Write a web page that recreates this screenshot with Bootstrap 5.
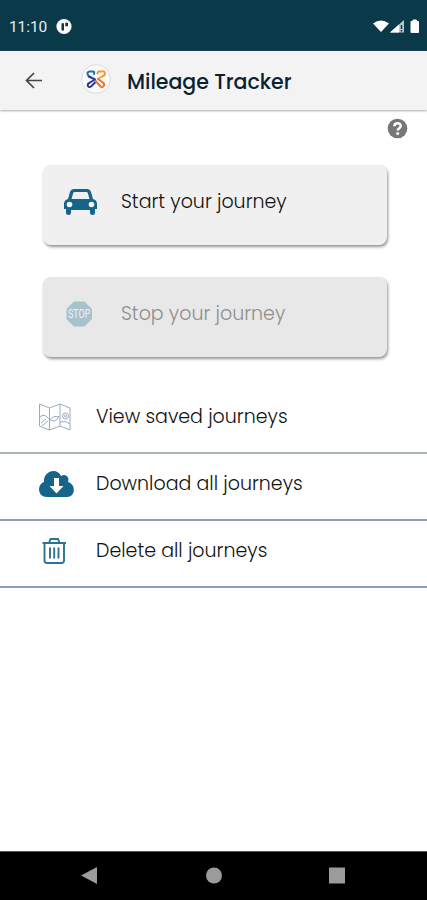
<!DOCTYPE html>
<html lang="en">
<head>
<meta charset="utf-8">
<meta name="viewport" content="width=device-width, initial-scale=1">
<title>Mileage Tracker</title>
<link href="https://cdn.jsdelivr.net/npm/bootstrap@5.3.0/dist/css/bootstrap.min.css" rel="stylesheet">
<style>
body{font-family:Poppins,Inter,"Open Sans",sans-serif;font-size:19px;font-weight:300;color:#111;line-height:28px}
svg{display:block;flex:none;overflow:visible}
.phone{height:900px}
.status{height:51px;background:#0a3a4a;padding:2px 6px 0 9px;font:400 15.5px/20px Roboto,sans-serif;color:#e9f0f2}
.clock{width:39px;letter-spacing:-.1px}
.appbar{height:59px;background:#f3f3f3;box-shadow:0 1px 2px #aaa;padding-left:24px}
.appbar h1{font-size:20.5px;line-height:28px;font-weight:500;color:#0b1f2e;margin:2px 0 0 15px;letter-spacing:-.02px}
.logo{margin-left:36px}
.help{padding:8px 19px 0 0;height:55px}
.tile{width:344px;height:80px;margin-left:43px;border:0;border-radius:8px;background:#f0f0f0;box-shadow:1px 2px 3px rgba(0,0,0,.42);padding:0 0 6px 20px;text-align:left;font-weight:300;color:#111}
.tile + .tile{margin-top:32px}
.tile.off{background:#e8e8e8;color:#8e8e8e}
.tile .pic{width:58px}
.entries{padding-top:30px}
.entry{height:67px;border-bottom:2px solid #8b9fbb;padding:0 0 5px 38px}
.entry .pic{width:58px}
.entry.first{border-color:#a9b6bf}
.navkeys{height:49px;background:#000;border-top:1px solid #555}
</style>
</head>
<body>
<div class="phone d-flex flex-column bg-white overflow-hidden">
  <header class="status d-flex align-items-center">
    <span class="clock">11:10</span>
    <svg class="ms-2" width="16" height="16" viewBox="0 0 16 16"><circle cx="8" cy="7.500" r="7.600" fill="#fff"/><path d="M5.500 11.500V4.200h2.500v7.300zM9.300 3.800H12v3.400H9.300z" fill="#0a3a4a"/></svg>
    <svg class="ms-auto" width="50" height="18" viewBox="0 0 50 18"><path d="M2 5.500Q10 -.5 18 5.500L10 14z" fill="#fff"/><path d="M19 14.500L33 2V14.500z" fill="#b9c5ca"/><path d="M19 14.500L28 6.400V14.500z" fill="#fff"/><path d="M30.500 7v4M30.500 12v1.500" stroke="#0a3a4a" stroke-width="1.500"/><path d="M40 3.500h2V2h3.500v1.500h2v11h-7.500z" fill="#fff" stroke="#fff" stroke-linejoin="round"/></svg>
  </header>
  <div class="appbar d-flex align-items-center flex-shrink-0 position-relative">
    <svg width="20" height="18" viewBox="0 0 20 18"><path d="M18 8.500H3M10 1L2.500 8.500l7.500 7.500" fill="none" stroke="#454545" stroke-width="1.700"/></svg>
    <svg class="logo" width="32" height="32" viewBox="0 0 32 32"><circle cx="16" cy="14" r="14.400" fill="#f9f9f9" stroke="#ddd"/><g fill="none" stroke-width="2" stroke-linecap="round" stroke-linejoin="round"><path d="M9 11.500C6 8 8 6 10.500 6.500S15 5.500 14 9" stroke="#276bb0"/><path d="M9 11.500L15 14.500L10 17.500C6 19.500 8 23.500 11 21.500L16 16.500" stroke="#28389c"/><path d="M17.500 8.500C18 5 20.500 7 22 6.500C25.500 5.500 26 9.500 23 11L18 14" stroke="#f59a2b"/><path d="M18 14L23 17.500C26 20.500 22 23.500 20.500 21.500L16 16.500" stroke="#ed752d"/></g></svg>
    <h1>Mileage Tracker</h1>
  </div>
  <main class="flex-grow-1">
    <div class="help d-flex justify-content-end">
      <svg width="21" height="21" viewBox="0 0 21 21"><circle cx="10.500" cy="10.500" r="9.800" fill="#777"/><path d="M7.300 8.300C7.500 4.100 14 4.200 13.700 8.200C13.500 10.200 10.700 10.200 10.700 12.500" fill="none" stroke="#fff" stroke-width="2.500"/><circle cx="10.700" cy="15.500" r="1.500" fill="#fff"/></svg>
    </div>
    <button class="tile d-flex align-items-center">
      <span class="pic"><svg width="35" height="28" viewBox="0 0 35 28"><path fill="#17648a" fill-rule="evenodd" d="M11 1H24Q27 1 28 4L30 11Q34 12 34 16V21H32V25Q32 27 29.500 27T27 25V22H8V25Q8 27 5.500 27T3 25V21H1V16Q1 12 5 11L7 4Q8 1 11 1zM11.500 4Q10.500 4 10.200 5L8.500 11H26.500L24.800 5Q24.500 4 23.500 4z"/><circle cx="6.500" cy="16.500" r="2.800" fill="#f4f8fa"/><circle cx="28.500" cy="16.500" r="2.800" fill="#f4f8fa"/></svg></span>
      <span>Start your journey</span>
    </button>
    <button class="tile off d-flex align-items-center" disabled>
      <span class="pic"><svg width="32" height="26" viewBox="0 0 32 26"><path d="M11 .5H21.500L29 8V18L21.500 25.500H11L3.500 18V8z" fill="#a7c1cd"/><text x="5" y="17.300" textLength="22.500" lengthAdjust="spacingAndGlyphs" font-family="Roboto,sans-serif" font-size="12" font-weight="400" fill="#eef3f5">STOP</text></svg></span>
      <span>Stop your journey</span>
    </button>
    <div class="entries">
      <div class="entry first d-flex align-items-center">
        <span class="pic"><svg width="34" height="30" viewBox="0 0 34 30"><g fill="none" stroke="#9aaac0" stroke-width="1"><path d="M1.500 2L11.500 6L22 2L32 6V28L22 24L11.500 28L1.500 24zM11.500 6V28M22 2V24"/><path d="M2 15Q6 11 10 16Q17 23 21 14M3 21L8 17M4 24L10 19M12 18Q15 13 21 15M22 20Q27 18 32 22"/><circle cx="27.500" cy="14" r="3"/><circle cx="27.500" cy="14" r="1"/></g></svg></span>
        <span>View saved journeys</span>
      </div>
      <div class="entry d-flex align-items-center">
        <span class="pic"><svg width="37" height="28" viewBox="0 0 37 28"><path d="M9 27C-1 27-1 14 6 12C5 1 19-3 23 6C28 3 32 8 30 12C38 14 38 27 29 27z" fill="#17648a"/><path d="M16 8h5v8h4.500l-7 7.500L11.500 16H16z" fill="#fff"/></svg></span>
        <span>Download all journeys</span>
      </div>
      <div class="entry d-flex align-items-center">
        <span class="pic"><svg width="32" height="28" viewBox="0 0 32 28"><g fill="none" stroke="#2d7194" stroke-width="1.900"><path d="M4.500 6H28M11 6L12.500 2H20L21.500 6M6.500 6V23.500Q6.500 26 9 26H23.500Q26 26 26 23.500V6M12 10.500V21.500M16.200 10.500V21.500M20.500 10.500V21.500"/></g></svg></span>
        <span>Delete all journeys</span>
      </div>
    </div>
  </main>
  <footer class="navkeys flex-shrink-0">
    <svg width="427" height="48" viewBox="0 0 427 48" fill="#9b9b9b"><path d="M81 23.500L97 15V32z"/><circle cx="214" cy="23.500" r="8"/><path d="M329 15.500h16v16h-16z"/></svg>
  </footer>
</div>
<script src="https://cdn.jsdelivr.net/npm/bootstrap@5.3.0/dist/js/bootstrap.bundle.min.js"></script>
</body>
</html>
